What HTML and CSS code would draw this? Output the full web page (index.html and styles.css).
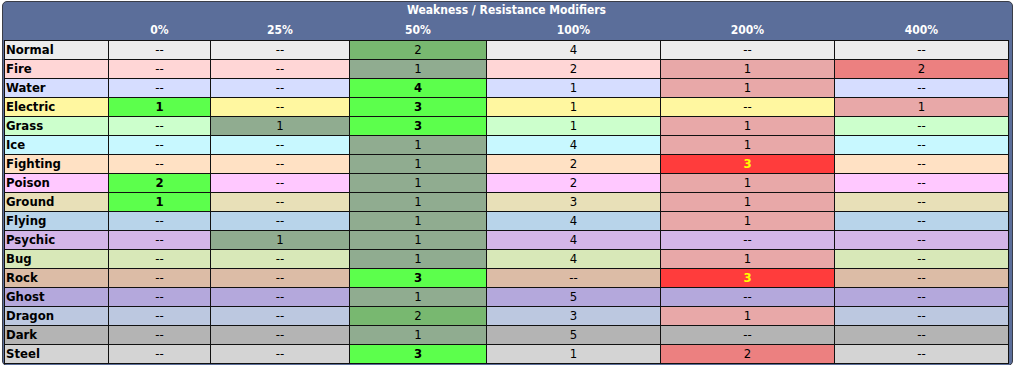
FILE: index.html
```html
<!DOCTYPE html>
<html>
<head>
<meta charset="utf-8">
<link rel="stylesheet" href="styles.css">
</head>
<body>
<div class="box">
<table class="mods">
<colgroup>
<col class="c-name"><col class="c0"><col class="c25"><col class="c50"><col class="c100"><col class="c200"><col class="c400">
</colgroup>
<thead>
<tr class="title"><th colspan="7">Weakness / Resistance Modifiers</th></tr>
<tr class="cols"><th></th><th>0%</th><th>25%</th><th>50%</th><th>100%</th><th>200%</th><th>400%</th></tr>
</thead>
<tbody>
<tr class="t-normal"><th>Normal</th><td>--</td><td>--</td><td class="dg">2</td><td>4</td><td>--</td><td>--</td></tr>
<tr class="t-fire"><th>Fire</th><td>--</td><td>--</td><td class="gg">1</td><td>2</td><td class="pk">1</td><td class="r2">2</td></tr>
<tr class="t-water"><th>Water</th><td>--</td><td>--</td><td class="bg">4</td><td>1</td><td class="pk">1</td><td>--</td></tr>
<tr class="t-electric"><th>Electric</th><td class="bg">1</td><td>--</td><td class="bg">3</td><td>1</td><td>--</td><td class="pk">1</td></tr>
<tr class="t-grass"><th>Grass</th><td>--</td><td class="gg">1</td><td class="bg">3</td><td>1</td><td class="pk">1</td><td>--</td></tr>
<tr class="t-ice"><th>Ice</th><td>--</td><td>--</td><td class="gg">1</td><td>4</td><td class="pk">1</td><td>--</td></tr>
<tr class="t-fighting"><th>Fighting</th><td>--</td><td>--</td><td class="gg">1</td><td>2</td><td class="rd">3</td><td>--</td></tr>
<tr class="t-poison"><th>Poison</th><td class="bg">2</td><td>--</td><td class="gg">1</td><td>2</td><td class="pk">1</td><td>--</td></tr>
<tr class="t-ground"><th>Ground</th><td class="bg">1</td><td>--</td><td class="gg">1</td><td>3</td><td class="pk">1</td><td>--</td></tr>
<tr class="t-flying"><th>Flying</th><td>--</td><td>--</td><td class="gg">1</td><td>4</td><td class="pk">1</td><td>--</td></tr>
<tr class="t-psychic"><th>Psychic</th><td>--</td><td class="gg">1</td><td class="gg">1</td><td>4</td><td>--</td><td>--</td></tr>
<tr class="t-bug"><th>Bug</th><td>--</td><td>--</td><td class="gg">1</td><td>4</td><td class="pk">1</td><td>--</td></tr>
<tr class="t-rock"><th>Rock</th><td>--</td><td>--</td><td class="bg">3</td><td>--</td><td class="rd">3</td><td>--</td></tr>
<tr class="t-ghost"><th>Ghost</th><td>--</td><td>--</td><td class="gg">1</td><td>5</td><td>--</td><td>--</td></tr>
<tr class="t-dragon"><th>Dragon</th><td>--</td><td>--</td><td class="dg">2</td><td>3</td><td class="pk">1</td><td>--</td></tr>
<tr class="t-dark"><th>Dark</th><td>--</td><td>--</td><td class="gg">1</td><td>5</td><td>--</td><td>--</td></tr>
<tr class="t-steel"><th>Steel</th><td>--</td><td>--</td><td class="bg">3</td><td>1</td><td class="r2">2</td><td>--</td></tr>
</tbody>
</table>
</div>
</body>
</html>
```

FILE: styles.css
```css
html, body {
  margin: 0;
  padding: 0;
  background: #fff;
}
body {
  padding: 1px 3px 0 2px;
  font-family: "DejaVu Sans Condensed", "DejaVu Sans", sans-serif;
}
.box {
  width: 1007px;
  border: 1px solid #3a3d48;
  border-radius: 5px;
  background: #5b6e9a;
  padding: 0 1px 1px 1px;
  overflow: hidden;
}
.mods {
  border-collapse: collapse;
  table-layout: fixed;
  width: 1005px;
}
.c-name { width: 104px; }
.c0 { width: 102px; }
.c25 { width: 139px; }
.c50 { width: 137px; }
.c100 { width: 174px; }
.c200 { width: 174px; }
.c400 { width: 174px; }

.mods thead th {
  color: #fff;
  font-weight: bold;
  font-size: 12px;
  text-align: center;
  padding: 0;
}
.title th {
  height: 19px;
  line-height: 17px;
  vertical-align: top;
  padding-top: 1px;
  font-size: 12.5px;
}
.cols th {
  height: 19px;
  line-height: 19px;
  vertical-align: bottom;
}
.mods tbody th,
.mods tbody td {
  border: 1px solid #111;
  height: 18px;
  padding: 0;
  font-size: 13px;
  line-height: 18px;
  color: #000;
}
.mods tbody th {
  text-align: left;
  padding-left: 1px;
  font-weight: bold;
}
.mods tbody td {
  text-align: center;
}

.t-normal { background: #ececec; }
.t-fire { background: #ffd6d6; }
.t-water { background: #d6ddff; }
.t-electric { background: #fff7a0; }
.t-grass { background: #ccffcc; }
.t-ice { background: #c8f8ff; }
.t-fighting { background: #ffe1c4; }
.t-poison { background: #ffc8ff; }
.t-ground { background: #e8e0b8; }
.t-flying { background: #b8d4ea; }
.t-psychic { background: #d4b6e8; }
.t-bug { background: #d8e8b8; }
.t-rock { background: #dcbca6; }
.t-ghost { background: #b4a8dc; }
.t-dragon { background: #bcc8e0; }
.t-dark { background: #b4b4b4; }
.t-steel { background: #d4d4d4; }

.mods tbody td.dg { background: #78b870; }
.mods tbody td.gg { background: #90ac90; }
.mods tbody td.bg { background: #5cff4c; font-weight: bold; }
.mods tbody td.pk { background: #e8a8a8; }
.mods tbody td.r2 { background: #ec8080; }
.mods tbody td.rd { background: #ff3c3c; color: #ffff00; font-weight: bold; }
```
